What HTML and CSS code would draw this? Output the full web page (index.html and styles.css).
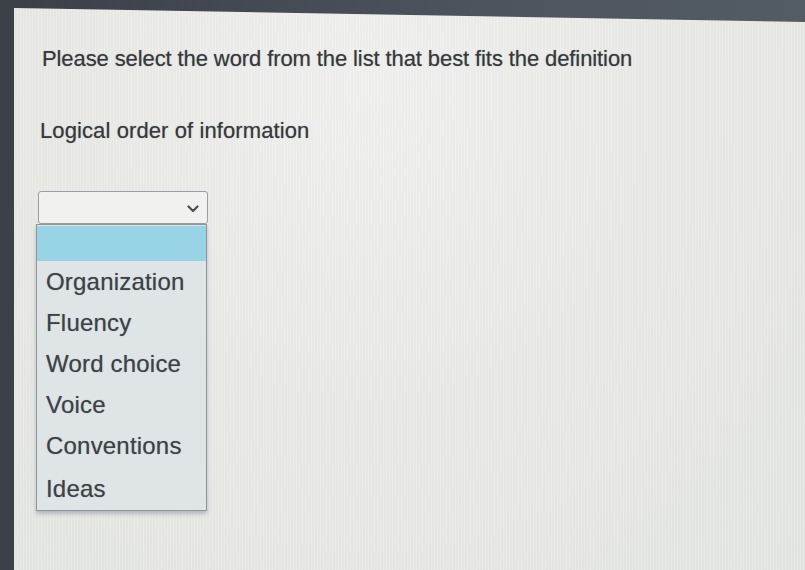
FILE: index.html
```html
<!DOCTYPE html>
<html lang="en">
<head>
<meta charset="utf-8">
<title>Vocabulary question</title>
<link rel="stylesheet" href="styles.css">
</head>
<body>
<div class="screen">
  <div class="bezel"></div>
  <main class="panel">
    <p class="prompt">Please select the word from the list that best fits the definition</p>
    <p class="definition">Logical order of information</p>
    <div class="picker">
      <div class="select">
        <svg class="chevron" width="12" height="8" viewBox="0 0 12 8"><path d="M1.5 1.5 L6 6 L10.5 1.5" fill="none" stroke="#4a4f55" stroke-width="2.2" stroke-linecap="round" stroke-linejoin="round"/></svg>
      </div>
      <ul class="options">
        <li class="option blank"></li>
        <li class="option">Organization</li>
        <li class="option">Fluency</li>
        <li class="option">Word choice</li>
        <li class="option">Voice</li>
        <li class="option">Conventions</li>
        <li class="option last">Ideas</li>
      </ul>
    </div>
  </main>
</div>
</body>
</html>
```
FILE: styles.css
```css
html, body {
  margin: 0;
  height: 100%;
}

body {
  background: linear-gradient(90deg, #3a3f48 0%, #4d545d 60%, #535b63 100%);
  font-family: "Liberation Sans", Arial, sans-serif;
  color: #3d4144;
  overflow: hidden;
}

.screen {
  display: flex;
  height: 570px;
}

.bezel {
  width: 14px;
  flex: none;
  background: #3b4049;
}

.panel {
  flex: 1;
  padding: 46px 0 0 28px;
  background:
    repeating-linear-gradient(90deg, rgba(255,255,255,0.18) 0 1px, rgba(0,0,0,0) 1px 3px),
    radial-gradient(ellipse at 45% 15%, #eeefec 0%, #e7e8e4 45%, #e1e3df 100%);
  clip-path: polygon(0 8px, 100% 22px, 100% 100%, 0 100%);
}

.prompt,
.definition {
  margin: 0;
  font-size: 22px;
  line-height: 26px;
  color: #35393c;
  text-shadow: 0 0 1px rgba(40, 44, 48, 0.45);
}

.prompt {
  letter-spacing: -0.1px;
}

.definition {
  margin: 46px 0 0 -2px;
  letter-spacing: 0.1px;
}

.picker {
  margin: 47px 0 0 -6px;
  width: 172px;
}

.select {
  margin-left: 2px;
  height: 31px;
  width: 160px;
  padding-right: 8px;
  border: 1px solid #9a9ea2;
  border-radius: 3px;
  background: #f1f2f0;
  display: flex;
  align-items: center;
  justify-content: flex-end;
}

.chevron {
  display: block;
  margin-top: 2px;
}

.options {
  list-style: none;
  margin: 0;
  padding: 1px 0 2px;
  width: 169px;
  background: #dfe4e6;
  border: 1px solid #8f9497;
  box-shadow: 0 3px 4px rgba(90, 100, 130, 0.35);
}

.option {
  height: 41px;
  line-height: 41px;
  padding-left: 9px;
  font-size: 24px;
  letter-spacing: 0.2px;
  color: #3c4145;
  text-shadow: 0 0 1px rgba(40, 44, 48, 0.4);
}

.option.blank {
  height: 35px;
  background: #98d3e6;
}

.option.last {
  height: 42px;
  line-height: 46px;
}
```
